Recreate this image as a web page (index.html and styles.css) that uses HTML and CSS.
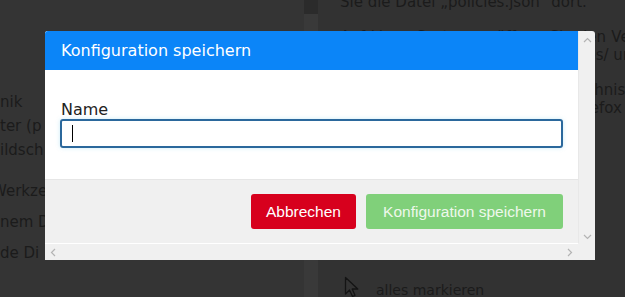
FILE: index.html
```html
<!DOCTYPE html>
<html lang="de">
<head>
    <meta charset="UTF-8">
    <meta name="viewport" content="width=device-width, initial-scale=1.0">
    <title>Konfiguration speichern</title>
    <link rel="stylesheet" href="styles.css">
</head>
<body>
    <div class="screen">
        <aside class="sidebar">
            <div class="side-group">
                <div class="side-line">nik</div>
                <div class="side-line">ter (p</div>
                <div class="side-line">ildsch</div>
            </div>
            <div class="side-list">
                <div class="side-item cut">Werkze</div>
                <div class="side-item">nem D</div>
                <div class="side-item">de Di</div>
            </div>
        </aside>
        <div class="gutter"><div class="thumb"></div></div>
        <main class="content">
            <p class="lead">Sie die Datei „policies.json“ dort.</p>
            <div class="para">
                <div class="line wide">Auf Linux-Systemen öffnen Sie den Verzeichnis</div>
                <div class="line">das Verzeichnis /etc/firefox/policies/ und</div>
            </div>
            <div class="para">
                <div class="line">Legen Sie die Datei in das Verzeichnis</div>
                <div class="line">etwa im Hauptverzeichnis von Firefox</div>
            </div>
            <div class="menu-row">
                <svg class="pointer" width="16" height="22" viewBox="0 0 16 22">
                    <path d="M1.5 1.5 L1.5 18 L5.5 14 L8.5 20.5 L11 19.3 L8.2 13 L13.8 13 Z" fill="#333" stroke="#141414" stroke-width="1.3" stroke-linejoin="round"/>
                </svg>
                <span>alles markieren</span>
            </div>
        </main>
    </div>

    <div class="modal">
        <div class="modal-main">
            <div class="modal-header">Konfiguration speichern</div>
            <div class="modal-body">
                <label class="field-label">Name</label>
                <div class="field-input"><span class="caret"></span></div>
            </div>
            <div class="modal-footer">
                <button class="btn btn-cancel">Abbrechen</button>
                <button class="btn btn-save">Konfiguration speichern</button>
            </div>
        </div>
        <div class="vscroll">
            <svg width="9" height="6" viewBox="0 0 9 6"><path d="M1 5 L4.5 1.5 L8 5" fill="none" stroke="#b4b4b4" stroke-width="1.2"/></svg>
            <svg width="9" height="6" viewBox="0 0 9 6"><path d="M1 1 L4.5 4.5 L8 1" fill="none" stroke="#b4b4b4" stroke-width="1.2"/></svg>
        </div>
        <div class="hscroll">
            <svg width="6" height="9" viewBox="0 0 6 9"><path d="M5 1 L1.5 4.5 L5 8" fill="none" stroke="#b4b4b4" stroke-width="1.2"/></svg>
            <svg width="6" height="9" viewBox="0 0 6 9"><path d="M1 1 L4.5 4.5 L1 8" fill="none" stroke="#b4b4b4" stroke-width="1.2"/></svg>
        </div>
        <div class="corner"></div>
    </div>
</body>
</html>
```

FILE: styles.css
```css
body {
    margin: 0;
    width: 625px;
    height: 297px;
    overflow: hidden;
    background-color: #323232;
    font-family: 'DejaVu Sans', Verdana, sans-serif;
    position: relative;
}
.screen {
    display: flex;
    height: 297px;
    color: #1b1b1b;
    font-size: 15px;
}
.sidebar {
    width: 304px;
    background-color: #343434;
    padding-top: 90px;
    box-sizing: border-box;
}
.side-line {
    height: 24px;
    line-height: 24px;
}
.side-list {
    margin-top: 14px;
}
.side-item {
    height: 31px;
    line-height: 31px;
}
.cut {
    text-indent: -8px;
}
.gutter {
    width: 14px;
    background-color: #393939;
}
.thumb {
    height: 14px;
    background-color: #2b2b2b;
}
.content {
    flex: 1;
    padding-left: 22px;
    overflow: hidden;
    white-space: nowrap;
}
.lead {
    margin: -7px 0 0 0;
    line-height: 18px;
}
.para {
    margin-top: 17px;
}
.line {
    line-height: 18px;
}
.wide {
    word-spacing: 0.6px;
}
.menu-row {
    display: flex;
    align-items: flex-end;
    gap: 16px;
    margin-top: 159px;
    font-size: 14px;
}
.pointer {
    display: block;
    margin-left: 4px;
}

.modal {
    position: absolute;
    left: 45px;
    top: 31px;
    width: 550px;
    height: 229px;
    display: grid;
    grid-template-columns: 1fr 17px;
    grid-template-rows: 1fr 17px;
    background-color: #f0f0f0;
    border-radius: 3px 3px 0 0;
    overflow: hidden;
}
.modal-main {
    display: flex;
    flex-direction: column;
    background-color: #fff;
}
.modal-header {
    height: 39px;
    display: flex;
    align-items: center;
    padding: 0 16px;
    background-color: #0b85f8;
    color: #fff;
    font-size: 16px;
}
.modal-body {
    flex: 1;
    padding: 30px 15px 0 15px;
}
.field-label {
    display: block;
    padding-left: 1px;
    font-size: 16px;
    line-height: 19px;
    color: #222;
}
.field-input {
    height: 25px;
    border: 2px solid #2b689c;
    border-radius: 3px;
    display: flex;
    align-items: center;
    padding-left: 10px;
    box-shadow: 0 0 4px rgba(102, 200, 233, 0.35);
}
.caret {
    width: 1px;
    height: 17px;
    background-color: #000;
}
.modal-footer {
    height: 63px;
    border-top: 1px solid #e6e6e6;
    background-color: #f0f0f0;
    display: flex;
    justify-content: flex-end;
    align-items: center;
    gap: 10px;
    padding: 0 15px;
}
.btn {
    height: 35px;
    border: none;
    border-radius: 3px;
    font-family: 'Liberation Sans', Arial, sans-serif;
    font-size: 15.5px;
    padding: 0;
}
.btn-cancel {
    width: 105px;
    background-color: #d7001d;
    color: #fff;
}
.btn-save {
    width: 197px;
    background-color: #80d07a;
    color: #eef8ec;
}
.vscroll {
    display: flex;
    flex-direction: column;
    justify-content: space-between;
    align-items: center;
    padding: 6px 0 3px 0;
    border-left: 1px solid #e8e8e8;
}
.hscroll {
    display: flex;
    justify-content: space-between;
    align-items: center;
    padding: 0 5px 0 5px;
    border-top: 1px solid #fff;
}
.corner {
    background-color: #f0f0f0;
}
```
